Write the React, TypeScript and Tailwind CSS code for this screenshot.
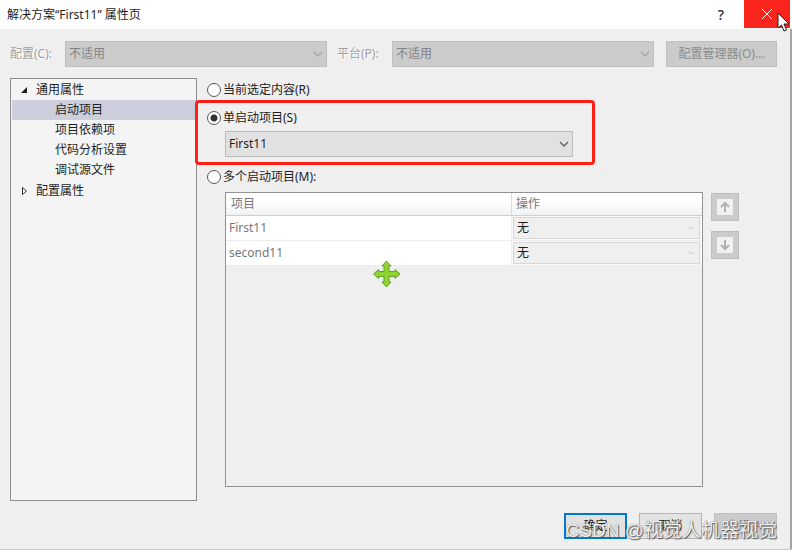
import { useState } from "react";
import clsx from "clsx";

type ComboProps = {
	id?: string;
	label?: string;
	options: string[];
	disabled?: boolean;
	className: string;
	chevronClassName: string;
	small?: boolean;
};

type Startup = "current" | "single" | "multiple";

const treeItems = ["启动项目", "项目依赖项", "代码分析设置", "调试源文件"];
const projects = ["First11", "second11"];

function Combo({
	id,
	label,
	options,
	disabled,
	className,
	chevronClassName,
	small,
}: ComboProps) {
	return (
		<div className="relative w-full min-w-0">
			<select
				id={id}
				aria-label={label}
				disabled={disabled}
				className={clsx(
					"block w-full appearance-none border pl-[3px] pr-6 opacity-100 outline-none",
					className,
				)}
			>
				{options.map((option) => (
					<option key={option}>{option}</option>
				))}
			</select>
			<svg
				viewBox="0 0 10 6"
				fill="none"
				stroke="currentColor"
				strokeWidth="1.5"
				className={clsx(
					"pointer-events-none absolute top-1/2 -translate-y-1/2",
					small ? "right-1.5 w-1.5" : "right-1 w-2.5",
					chevronClassName,
				)}
			>
				<path d="M1 1l4 4 4-4" />
			</svg>
		</div>
	);
}

function StartupRadio({
	value,
	current,
	onSelect,
	children,
}: {
	value: Startup;
	current: Startup;
	onSelect: (value: Startup) => void;
	children: React.ReactNode;
}) {
	return (
		<label className="flex h-5 items-center gap-0.5">
			<input
				type="radio"
				name="startup"
				checked={current === value}
				onChange={() => onSelect(value)}
				className="size-3.5 shrink-0 appearance-none rounded-full border border-[#555] bg-white checked:bg-[radial-gradient(circle,#333_0_3px,#fff_4px)]"
			/>
			{children}
		</label>
	);
}

function ArrowButton({ label, down }: { label: string; down?: boolean }) {
	return (
		<button
			type="button"
			disabled
			aria-label={label}
			className="flex size-7 items-center justify-center border border-[#bdbdbd] bg-[#cbcbcb]"
		>
			<svg
				viewBox="0 0 16 16"
				className={clsx("size-4 bg-[#f1f1f1]", down && "rotate-180")}
				fill="none"
				stroke="#b1b1b1"
				strokeWidth="2"
			>
				<path d="M8 13V4M4 8l4-4 4 4" />
			</svg>
		</button>
	);
}

export default function App() {
	const [startup, setStartup] = useState<Startup>("single");

	return (
		<div className="relative flex min-h-screen flex-col overflow-hidden border-b border-[#c8c8c8] bg-[#efefef] font-['Noto_Sans','Noto_Sans_CJK_SC',sans-serif] text-xs text-[#1e1e1e]">
			<header className="flex h-[29px] items-stretch bg-white pr-0.5">
				<h1 className="flex-1 self-center pl-[7px]">
					解决方案“First11” 属性页
				</h1>
				<button
					type="button"
					aria-label="帮助"
					className="w-[46px] text-sm font-medium"
				>
					?
				</button>
				<button
					type="button"
					aria-label="关闭"
					className="flex h-7 w-[46px] items-center justify-center bg-[#fb251d]"
				>
					<svg viewBox="0 0 12 12" className="size-3" stroke="#fff">
						<path d="M1 1l10 10M11 1L1 11" />
					</svg>
				</button>
			</header>

			<div className="flex flex-1 flex-col border-r-2 border-[#a5a5a5] pr-[13px] pl-2.5 pt-3 pb-2.5">
				<div className="flex h-[26px] items-center text-[#a0a0a0]">
					<label
						htmlFor="config"
						className="w-[55px] shrink-0 [text-shadow:1px_1px_#fff]"
					>
						配置(C):
					</label>
					<Combo
						id="config"
						options={["不适用"]}
						disabled
						className="h-[26px] border-[#bfbfbf] bg-[#cbcbcb] text-[#838383]"
						chevronClassName="text-[#aaa]"
					/>
					<label
						htmlFor="platform"
						className="w-[65px] shrink-0 pl-2.5 [text-shadow:1px_1px_#fff]"
					>
						平台(P):
					</label>
					<Combo
						id="platform"
						options={["不适用"]}
						disabled
						className="h-[26px] border-[#bfbfbf] bg-[#cbcbcb] text-[#838383]"
						chevronClassName="text-[#aaa]"
					/>
					<button
						type="button"
						disabled
						className="ml-3 h-[26px] w-[111px] shrink-0 border border-[#bfbfbf] bg-[#cbcbcb] text-[#8b8b8b]"
					>
						配置管理器(O)...
					</button>
				</div>

				<main className="mt-[11px] flex flex-1">
					<nav className="mb-3 w-[187px] shrink-0 border border-[#8d8d8d] bg-[#f4f4f4] pl-px leading-5">
						<button type="button" className="flex h-[21px] w-full items-center">
							<svg viewBox="0 0 8 8" className="ml-2 mr-2 size-2">
								<path d="M7 1v6H1z" fill="#1e1e1e" />
							</svg>
							通用属性
						</button>
						<ul>
							{treeItems.map((item, index) => (
								<li key={item}>
									<button
										type="button"
										className={clsx(
											"block h-5 w-full pl-[43px] text-left",
											index === 0 && "bg-[#cccedb]",
										)}
									>
										{item}
									</button>
								</li>
							))}
						</ul>
						<button type="button" className="flex h-[21px] w-full items-center">
							<svg
								viewBox="0 0 8 8"
								className="ml-2 mr-2 size-2"
								fill="#fff"
								stroke="#333"
							>
								<path d="M2.5 0.5v7L6.5 4z" />
							</svg>
							配置属性
						</button>
					</nav>

					<section className="flex min-w-0 flex-1 flex-col pl-2.5 pt-0.5">
						<StartupRadio
							value="current"
							current={startup}
							onSelect={setStartup}
						>
							当前选定内容(R)
						</StartupRadio>

						<div className="relative mt-2 mr-[204px] pb-2.5">
							<StartupRadio
								value="single"
								current={startup}
								onSelect={setStartup}
							>
								单启动项目(S)
							</StartupRadio>
							<div className="mt-[3px] pl-[18px]">
								<Combo
									label="单启动项目"
									options={projects}
									className="h-[26px] border-[#bcbcbc] bg-[#e1e1e1]"
									chevronClassName="text-[#666]"
								/>
							</div>
							<div className="pointer-events-none absolute -top-2 -right-[22px] bottom-0.5 -left-3 rounded-sm border-3 border-[#ff2015]" />
						</div>

						<StartupRadio
							value="multiple"
							current={startup}
							onSelect={setStartup}
						>
							多个启动项目(M):
						</StartupRadio>

						<div className="mt-[5px] mb-[26px] flex flex-1 gap-2 pl-[18px]">
							<div className="flex-1 border border-[#929292]">
								<table className="w-full table-fixed border-collapse text-left text-[#777]">
									<thead className="bg-linear-to-b from-white from-40% to-[#f1f2f4]">
										<tr className="h-[22px] border-b border-[#cfcfcf]">
											<th className="w-3/5 border-r border-[#dcdcdc] pl-[5px] font-normal">
												<div className="leading-5">项目</div>
											</th>
											<th className="pl-1 font-normal">
												<div className="leading-5">操作</div>
											</th>
										</tr>
									</thead>
									<tbody>
										{projects.map((project) => (
											<tr
												key={project}
												className="h-6 border-b border-[#ededed]"
											>
												<td className="border-r border-[#ededed] bg-white pl-[3px]">
													{project}
												</td>
												<td className="bg-[#f8f8f8] py-px pl-px pr-0.5">
													<Combo
														label={`${project} 操作`}
														options={["无"]}
														disabled
														small
														className="h-[22px] border-[#d8d8d8] bg-[#efefef] text-[#1e1e1e]"
														chevronClassName="text-[#bfbfbf]"
													/>
												</td>
											</tr>
										))}
									</tbody>
								</table>
							</div>
							<div className="mr-[38px] flex flex-col gap-2.5 pt-px">
								<ArrowButton label="上移" />
								<ArrowButton label="下移" down />
							</div>
						</div>
					</section>
				</main>

				<footer className="relative flex justify-end gap-3">
					<button
						type="button"
						className="h-[26px] w-[63px] border-2 border-[#0078d7] bg-[#e1e1e1]"
					>
						确定
					</button>
					<button
						type="button"
						className="h-[26px] w-[63px] border border-[#b5b5b5] bg-[#e3e3e3]"
					>
						取消
					</button>
					<button
						type="button"
						disabled
						className="h-[26px] w-[63px] border border-[#c0c0c0] bg-[#cbcbcb] text-[#8b8b8b]"
					>
						应用(A)
					</button>
					<p className="pointer-events-none absolute right-0 top-1 font-['Liberation_Sans','Noto_Sans_CJK_SC',sans-serif] text-[19px] leading-7 whitespace-nowrap text-[#eee] [text-shadow:1px_1px_1px_#555,0_0_1px_#777]">
						CSDN @视觉人机器视觉
					</p>
				</footer>
			</div>

			<svg
				viewBox="0 0 28 28"
				className="absolute top-[260px] left-[373px] size-7"
				fill="#8fd42f"
				stroke="#5fa028"
			>
				<path d="M13.500 1l4.500 5h-2v5.500H22v-2l5 4.500-5 4.500v-2h-6V22h2l-4.500 5L9 22h2v-5.500H5.500v2L.5 14l5-4.500v2H11V6H9z" />
			</svg>
			<svg
				viewBox="0 0 13 20"
				className="absolute top-3 right-0.5 h-5 w-[13px]"
				fill="#fff"
				stroke="#222"
			>
				<path d="M1 1v15l3.500-3 2.500 6 2.500-1-2.500-6h5z" />
			</svg>
		</div>
	);
}
